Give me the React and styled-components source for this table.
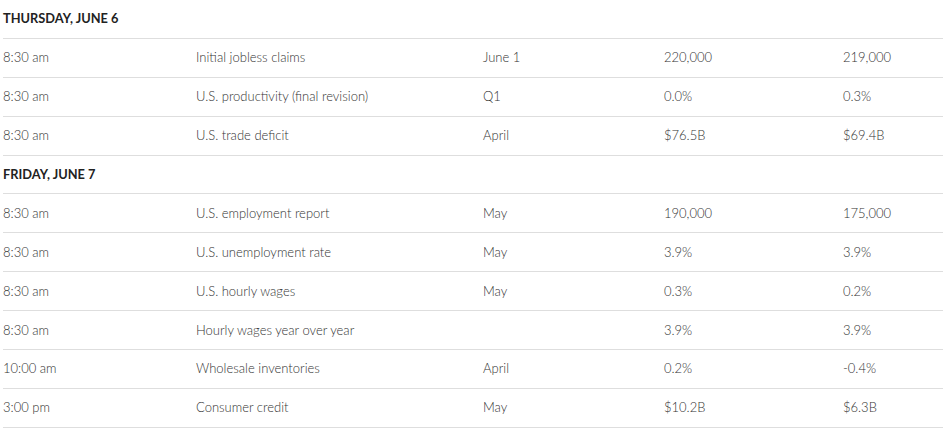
import React from 'react';
import styled, { createGlobalStyle } from 'styled-components';

const GlobalStyle = createGlobalStyle`
  body {
    margin: 0;
    background: #fff;
    font-family: Lato, "Open Sans", sans-serif;
    color: #333;
  }
`;

const Table = styled.div`
  width: 940px;
  margin-left: 3px;
`;

const Row = styled.div`
  display: grid;
  grid-template-columns: 193px 287px 181px 179px 1fr;
  align-items: center;
  height: 38.9px;
  box-sizing: border-box;
  border-bottom: 1px solid #dedede;
  padding-bottom: 1px;
  font-size: 13px;
  font-weight: 300;
  color: #333;
`;

const DayHeader = styled.div`
  display: flex;
  align-items: center;
  height: 38.9px;
  box-sizing: border-box;
  border-bottom: 1px solid #dedede;
  font-size: 12.8px;
  font-weight: 700;
  color: #222;
  padding-bottom: 2px;
`;

const Cell = styled.span`
  white-space: nowrap;
`;

const days = [
  {
    title: 'THURSDAY, JUNE 6',
    rows: [
      ['8:30 am', 'Initial jobless claims', 'June 1', '220,000', '219,000'],
      ['8:30 am', 'U.S. productivity (final revision)', 'Q1', '0.0%', '0.3%'],
      ['8:30 am', 'U.S. trade deficit', 'April', '$76.5B', '$69.4B'],
    ],
  },
  {
    title: 'FRIDAY, JUNE 7',
    rows: [
      ['8:30 am', 'U.S. employment report', 'May', '190,000', '175,000'],
      ['8:30 am', 'U.S. unemployment rate', 'May', '3.9%', '3.9%'],
      ['8:30 am', 'U.S. hourly wages', 'May', '0.3%', '0.2%'],
      ['8:30 am', 'Hourly wages year over year', '', '3.9%', '3.9%'],
      ['10:00 am', 'Wholesale inventories', 'April', '0.2%', '-0.4%'],
      ['3:00 pm', 'Consumer credit', 'May', '$10.2B', '$6.3B'],
    ],
  },
];

const App = () => (
  <>
    <GlobalStyle />
    <Table>
      {days.map((day) => (
        <React.Fragment key={day.title}>
          <DayHeader>{day.title}</DayHeader>
          {day.rows.map((r, i) => (
            <Row key={i}>
              {r.map((c, j) => (
                <Cell key={j}>{c}</Cell>
              ))}
            </Row>
          ))}
        </React.Fragment>
      ))}
    </Table>
  </>
);

export default App;
